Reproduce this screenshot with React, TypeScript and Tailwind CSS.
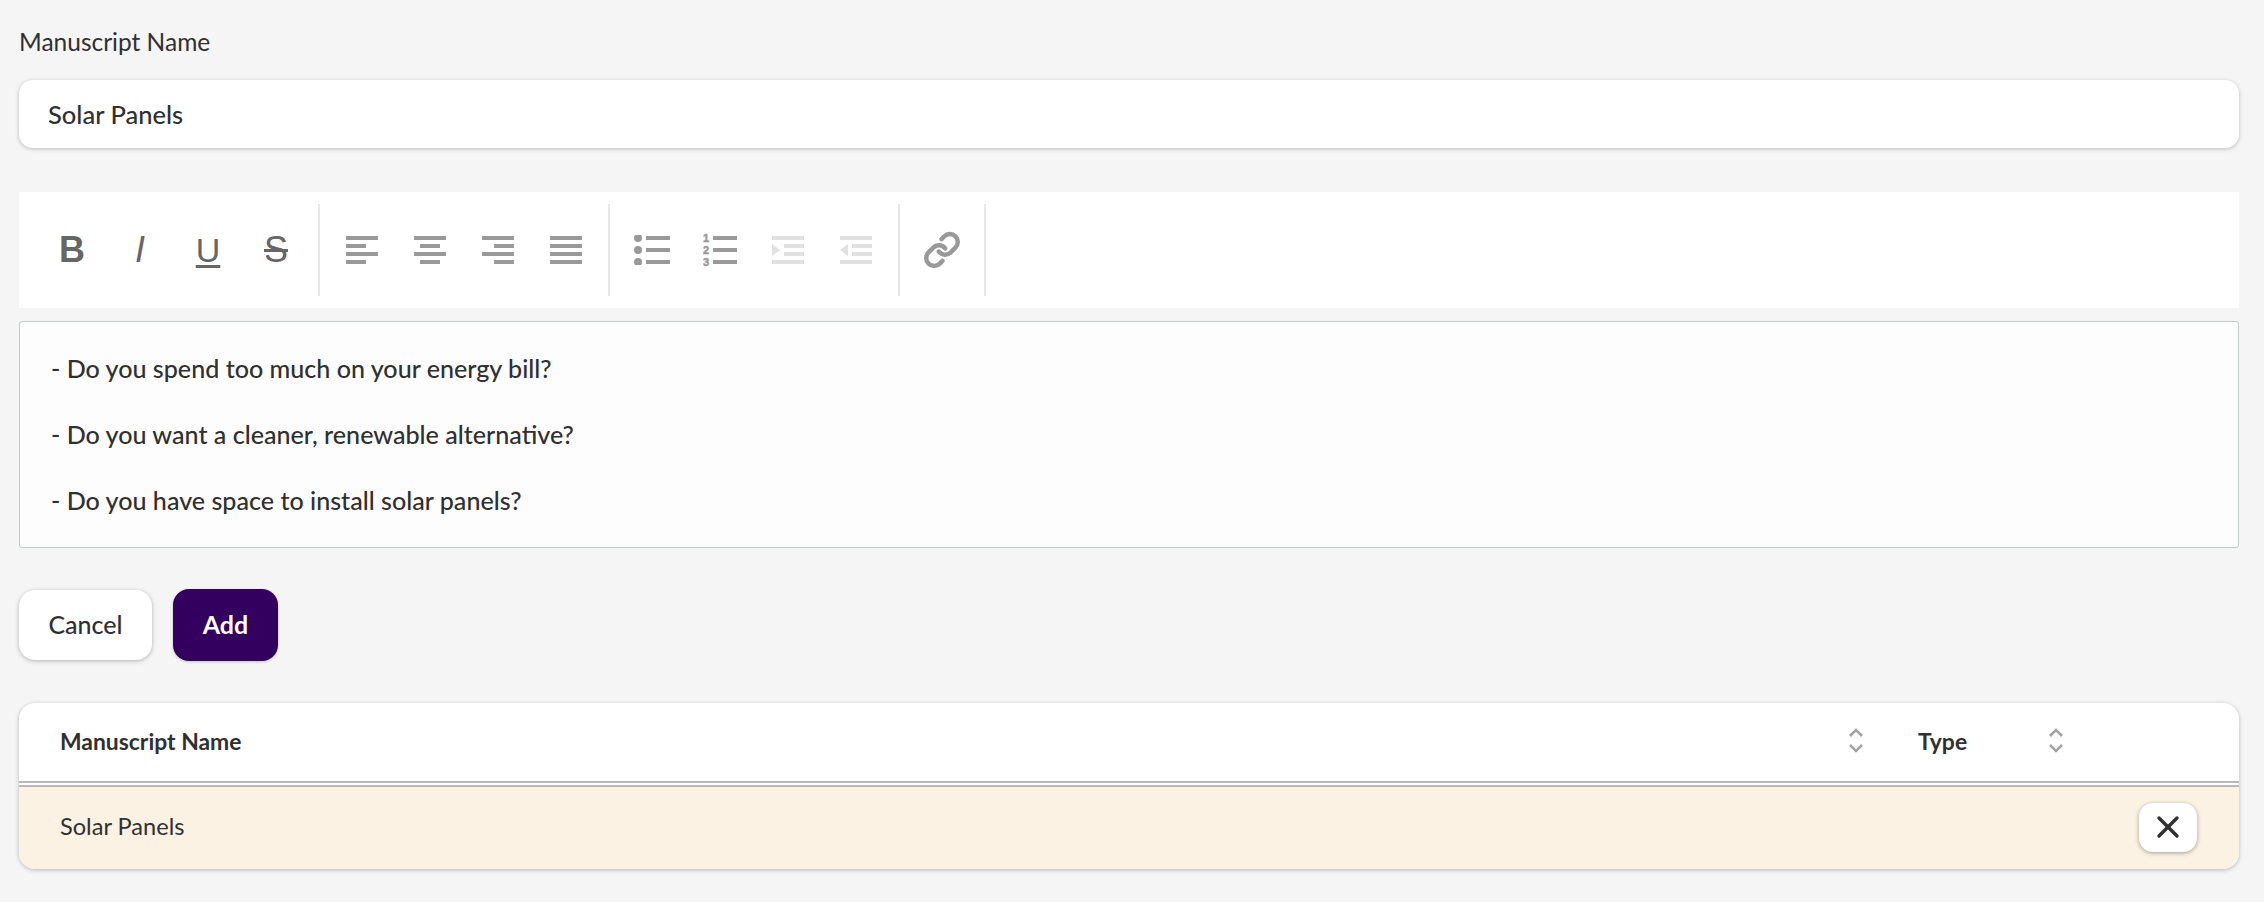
import { X } from 'lucide-react';
import type { ReactNode } from 'react';

const FONT = 'font-["Lato","Open_Sans",sans-serif]';

function Bars({ rows, fill = '#999999' }: { rows: [number, number][]; fill?: string }) {
  return (
    <svg width="32" height="28" viewBox="0 0 32 28" fill={fill}>
      {rows.map(([x, w], i) => (
        <rect key={i} x={x} y={i * 8} width={w} height="4" />
      ))}
    </svg>
  );
}

function BulletList() {
  return (
    <svg width="36" height="30" viewBox="0 0 36 30" fill="#999999">
      <circle cx="4" cy="3" r="4" />
      <circle cx="4" cy="15" r="4" />
      <circle cx="4" cy="27" r="4" />
      <rect x="12" y="1" width="24" height="4" />
      <rect x="12" y="13" width="24" height="4" />
      <rect x="12" y="25" width="24" height="4" />
    </svg>
  );
}

function NumberList() {
  return (
    <svg width="34" height="36" viewBox="0 0 34 36" fill="#999999" stroke="#999999" strokeWidth="0.500">
      <text x="0" y="10" fontSize="11" fontWeight="700" fontFamily="Liberation Sans, sans-serif">1</text>
      <text x="0" y="22" fontSize="11" fontWeight="700" fontFamily="Liberation Sans, sans-serif">2</text>
      <text x="0" y="34" fontSize="11" fontWeight="700" fontFamily="Liberation Sans, sans-serif">3</text>
      <rect x="10" y="4" width="24" height="4" stroke="none" />
      <rect x="10" y="16" width="24" height="4" stroke="none" />
      <rect x="10" y="28" width="24" height="4" stroke="none" />
    </svg>
  );
}

function Indent({ out = false }: { out?: boolean }) {
  return (
    <svg width="32" height="28" viewBox="0 0 32 28" fill="#e1e1e1">
      <rect x="0" y="0" width="32" height="4" />
      <rect x="12" y="8" width="20" height="4" />
      <rect x="12" y="16" width="20" height="4" />
      <rect x="0" y="24" width="32" height="4" />
      {out ? <path d="M0 14l8-6v12z" /> : <path d="M8 14L0 8v12z" />}
    </svg>
  );
}

function LinkIcon() {
  return (
    <svg width="38" height="38" viewBox="0 0 24 24" fill="none" stroke="#999999" strokeWidth="2.800" strokeLinecap="round" strokeLinejoin="round">
      <path d="M10 13a5 5 0 0 0 7.500.500l3-3a5 5 0 0 0-7.100-7.100l-1.700 1.700" />
      <path d="M14 11a5 5 0 0 0-7.500-.500l-3 3a5 5 0 0 0 7.100 7.100l1.700-1.700" />
    </svg>
  );
}

function ToolBtn({ children }: { children: ReactNode }) {
  return <div className="flex h-full w-[68px] items-center justify-center">{children}</div>;
}

function Sep() {
  return <div className="h-[92px] w-[2px] shrink-0 bg-[#e4e8e7]" />;
}

function SortIcon() {
  return (
    <svg width="14" height="25" viewBox="0 0 14 25" fill="none" stroke="#a3a3a3" strokeWidth="2.500" strokeLinejoin="miter">
      <path d="M1 8l6-6 6 6" />
      <path d="M1 17l6 6 6-6" />
    </svg>
  );
}

export default function App() {
  return (
    <div className={`${FONT} h-[902px] overflow-hidden bg-[#f5f5f5] pl-[19px] pr-[25px] text-[#303030]`}>
      <label className="block pt-[27px] text-[24.500px] leading-[30px]">Manuscript Name</label>

      <div className="mt-[23px] flex h-[68px] items-center rounded-[14px] bg-white pl-[29px] text-[25.500px] font-medium shadow-[0_1px_4px_rgba(0,0,0,0.24)]">
        Solar Panels
      </div>

      {/* Toolbar */}
      <div className="mt-[44px] flex h-[116px] items-center bg-white pl-[19px] font-['Liberation_Sans',sans-serif]">
        <div className="flex h-full w-[280px] items-center text-[#666666]">
          <ToolBtn><span className="text-[36px] font-bold leading-none">B</span></ToolBtn>
          <ToolBtn><span className="text-[36px] italic leading-none">I</span></ToolBtn>
          <ToolBtn><span className="text-[34px] leading-none underline underline-offset-[3px]">U</span></ToolBtn>
          <ToolBtn><span className="text-[36px] leading-none line-through">S</span></ToolBtn>
        </div>
        <Sep />
        <div className="flex h-full w-[288px] items-center pl-[8px]">
          <ToolBtn><Bars rows={[[0, 32], [0, 20], [0, 32], [0, 20]]} /></ToolBtn>
          <ToolBtn><Bars rows={[[0, 32], [6, 20], [0, 32], [6, 20]]} /></ToolBtn>
          <ToolBtn><Bars rows={[[0, 32], [12, 20], [0, 32], [12, 20]]} /></ToolBtn>
          <ToolBtn><Bars rows={[[0, 32], [0, 32], [0, 32], [0, 32]]} /></ToolBtn>
        </div>
        <Sep />
        <div className="flex h-full w-[288px] items-center pl-[8px]">
          <ToolBtn><BulletList /></ToolBtn>
          <ToolBtn><NumberList /></ToolBtn>
          <ToolBtn><Indent /></ToolBtn>
          <ToolBtn><Indent out /></ToolBtn>
        </div>
        <Sep />
        <div className="flex h-full w-[84px] items-center justify-center">
          <LinkIcon />
        </div>
        <Sep />
      </div>

      {/* Editor */}
      <div className="mt-[13px] flex h-[227px] flex-col gap-[36px] rounded-[3px] border border-[#c4cbcb] bg-[#fdfdfd] pl-[31px] pt-[31px] text-[25.100px] font-medium leading-[30px]">
        <p>- Do you spend too much on your energy bill?</p>
        <p>- Do you want a cleaner, renewable alternative?</p>
        <p>- Do you have space to install solar panels?</p>
      </div>

      {/* Actions */}
      <div className="mt-[41px] flex items-center gap-[21px]">
        <button className="h-[70px] w-[133px] rounded-[16px] bg-white text-[25px] font-medium shadow-[0_1px_4px_rgba(0,0,0,0.28)]">
          Cancel
        </button>
        <button className="h-[72px] w-[105px] rounded-[16px] bg-[#33005f] text-[25px] font-bold text-white shadow-[0_1px_3px_rgba(0,0,0,0.2)]">
          Add
        </button>
      </div>

      {/* Table */}
      <div className="mt-[42px] overflow-hidden rounded-[16px] bg-white shadow-[0_1px_4px_rgba(0,0,0,0.26)]">
        <div className="flex h-[80px] items-center border-b-2 border-[#b8b8b8] pb-[2px] text-[22.900px] font-bold">
          <div className="flex flex-1 items-center justify-between pl-[41px] pr-[13px]">
            <span>Manuscript Name</span>
            <SortIcon />
          </div>
          <div className="flex w-[200px] items-center justify-between pl-[42px] pr-[13px]">
            <span>Type</span>
            <SortIcon />
          </div>
          <div className="w-[163px]" />
        </div>
        <div className="mt-[2px] flex h-[84px] items-center justify-between border-t-2 border-[#b8b8b8] bg-[#fcf2e3] pb-[2px] pl-[41px] pr-[42px] text-[23.600px]">
          <span>Solar Panels</span>
          <button className="flex h-[49px] w-[58px] items-center justify-center rounded-[14px] bg-white shadow-[0_1px_4px_rgba(0,0,0,0.35)]">
            <X size={36} strokeWidth={2.300} />
          </button>
        </div>
      </div>
    </div>
  );
}
